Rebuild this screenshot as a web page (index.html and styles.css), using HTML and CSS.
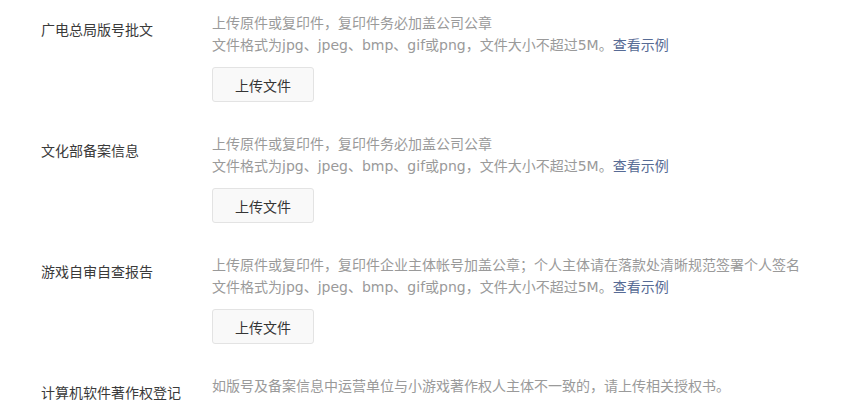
FILE: index.html
```html
<!DOCTYPE html>
<html lang="zh-CN">
<head>
<meta charset="utf-8">
<link rel="stylesheet" href="styles.css">
</head>
<body>
<div class="form">
  <div class="row">
    <div class="label">广电总局版号批文</div>
    <div class="field">
      <p class="desc">上传原件或复印件，复印件务必加盖公司公章</p>
      <p class="desc">文件格式为jpg、jpeg、bmp、gif或png，文件大小不超过5M。<a class="link" href="#">查看示例</a></p>
      <button class="btn">上传文件</button>
    </div>
  </div>
  <div class="row">
    <div class="label">文化部备案信息</div>
    <div class="field">
      <p class="desc">上传原件或复印件，复印件务必加盖公司公章</p>
      <p class="desc">文件格式为jpg、jpeg、bmp、gif或png，文件大小不超过5M。<a class="link" href="#">查看示例</a></p>
      <button class="btn">上传文件</button>
    </div>
  </div>
  <div class="row">
    <div class="label">游戏自审自查报告</div>
    <div class="field">
      <p class="desc">上传原件或复印件，复印件企业主体帐号加盖公章；个人主体请在落款处清晰规范签署个人签名</p>
      <p class="desc">文件格式为jpg、jpeg、bmp、gif或png，文件大小不超过5M。<a class="link" href="#">查看示例</a></p>
      <button class="btn">上传文件</button>
    </div>
  </div>
  <div class="row">
    <div class="label">计算机软件著作权登记</div>
    <div class="field">
      <p class="desc">如版号及备案信息中运营单位与小游戏著作权人主体不一致的，请上传相关授权书。</p>
    </div>
  </div>
</div>
</body>
</html>
```
FILE: styles.css
```css
* { box-sizing: border-box; }
html, body { margin: 0; padding: 0; background: #fff; }
body {
  font-family: "DejaVu Sans", "Noto Sans CJK SC", sans-serif;
  font-size: 14px;
  color: #353535;
}
.form {
  padding: 12px 0 0 41px;
  display: flex;
  flex-direction: column;
  gap: 31px;
}
.row {
  display: flex;
}
.label {
  width: 171px;
  flex: none;
  padding-top: 7px;
  line-height: 22px;
  color: #3a3a3a;
}
.field {
  display: flex;
  flex-direction: column;
  align-items: flex-start;
}
.desc {
  margin: 0;
  line-height: 22px;
  color: #9a9a9a;
  white-space: nowrap;
}
.link {
  color: #576b95;
  text-decoration: none;
}
.btn {
  margin-top: 11px;
  width: 102px;
  height: 35px;
  border: 1px solid #e3e3e3;
  border-radius: 3px;
  background: #f9f9f9;
  font-family: inherit;
  font-size: 14px;
  color: #353535;
  padding: 0;
}
```
